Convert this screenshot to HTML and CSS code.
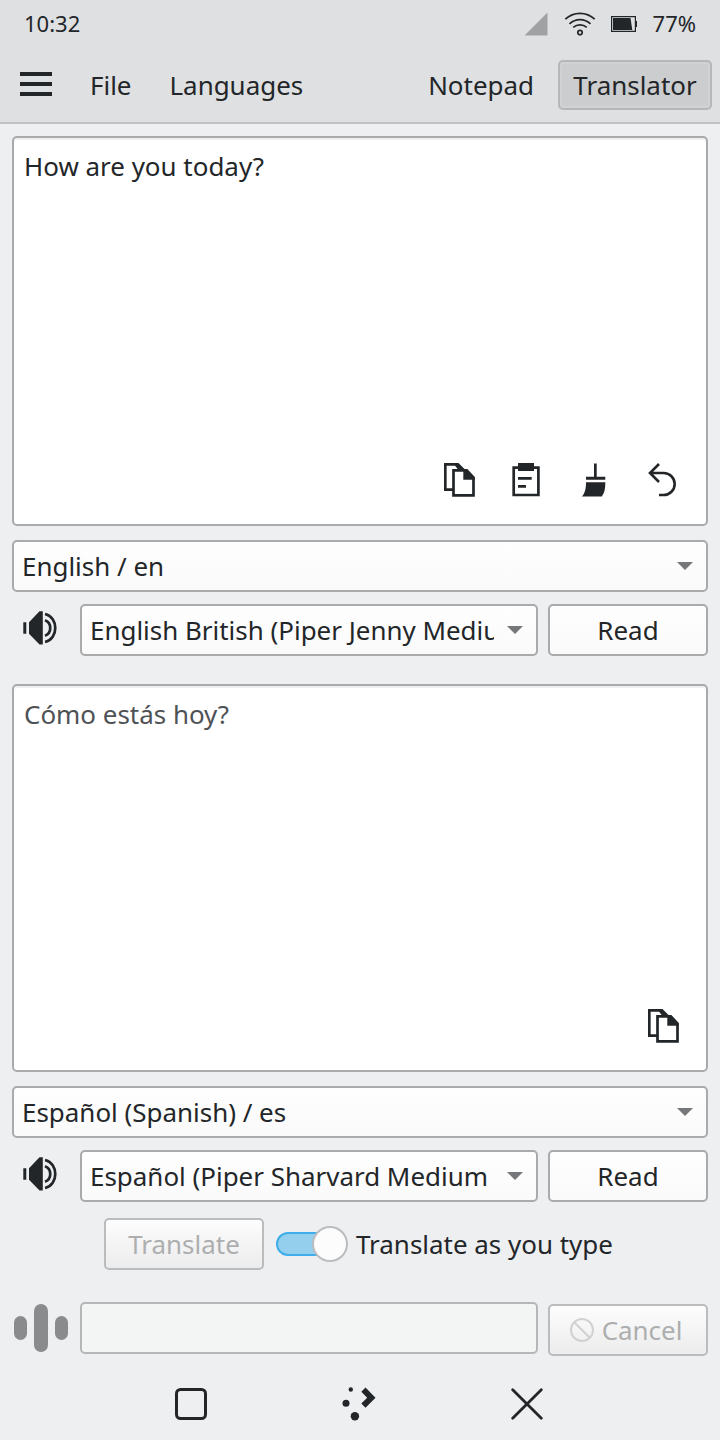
FILE: index.html
```html
<!DOCTYPE html>
<html lang="en">
<head>
<meta charset="utf-8">
<title>Translator</title>
<link rel="stylesheet" href="styles.css">
</head>
<body>
<svg class="defs" width="0" height="0">
  <symbol id="copy" viewBox="0 0 32 34">
    <path d="M9 26.700H1.300V1.300H13" fill="none" stroke="#232629" stroke-width="2.700"/>
    <path d="M9 0h5.500l6.500 6.500H14z" fill="#232629"/>
    <path d="M9.500 7.300H22l7.500 8V32.300h-20z" fill="#fff" stroke="#232629" stroke-width="2.700"/>
    <path d="M19.300 6h4l7.500 8v2.800H19.300z" fill="#232629"/>
  </symbol>
  <symbol id="speaker" viewBox="0 0 34 34">
    <path d="M.3 11.300h3v11.400h-3zM6 11.300L16.500.3H19.800v33.200H16.500L6 22.700z" fill="#232629"/>
    <path d="M22 3c13.700 3 13.700 25 0 28M22 9.300c7 2.500 7 12.900 0 15.400" fill="none" stroke="#232629" stroke-width="2.700"/>
  </symbol>
</svg>
<header class="header">
  <div class="status">
    <span class="clock">10:32</span>
    <svg class="signal" width="24" height="24"><path d="M.500 23.500L23.500.5v23z" fill="#a0a1a3"/></svg>
    <svg class="wifi" width="32" height="26" fill="none" stroke="#232629" stroke-width="1.700">
      <path d="M1.300 8.200C9.500.4 22.500.4 30.700 8.200M5.500 12.900c6-5.800 15-5.800 21 0M9.200 16.400c3.900-3.300 9.700-3.300 13.600 0"/><circle cx="16" cy="21.600" r="2.200"/>
    </svg>
    <svg class="battery" width="26" height="16"><path d="M.600.6h23.800v14.800H.6z" fill="none" stroke="#232629" stroke-width="1.200"/><path d="M24.500 5H26v6h-1.500z" fill="#232629"/><path d="M2 2h17.500L21.300 14H2z" fill="#232629"/></svg>
    <span class="percent">77%</span>
  </div>
  <nav class="toolbar">
    <div class="burger"><i></i><i></i><i></i></div>
    <span class="file">File</span>
    <span class="languages">Languages</span>
    <span class="notepad">Notepad</span>
    <span class="active">Translator</span>
  </nav>
</header>
<main class="main">
  <section class="editor source">
    <p>How are you today?</p>
    <div class="tools">
      <svg width="32" height="34"><use href="#copy"/></svg>
      <svg class="paste" width="28" height="34"><path d="M1.700 4.700h24.700v27.300H1.700z" fill="none" stroke="#232629" stroke-width="2.700"/><path d="M6 0h16v8H6zM6 14h13.700v2.700H6zM6 22h8v2.700H6z" fill="#232629"/></svg>
      <svg class="brush" width="24" height="34"><path d="M12 .5h2.700v13.200h8.600v3H4v-3h8zM4 19.300H23.300c0 5-.3 10-3.500 14.200H0c3.500-4 4-9 4-14.200z" fill="#232629"/></svg>
      <svg class="undo" width="28" height="34"><path d="M11 1L2 10l9 9M2 10h13.700a11 11 0 0 1 0 22H11" fill="none" stroke="#232629" stroke-width="2.600"/></svg>
    </div>
  </section>
  <div class="field lang"><span>English / en</span><svg class="arrow" width="16" height="8"><path d="M0 0h16l-8 8z"/></svg></div>
  <div class="voice">
    <svg class="speaker" width="34" height="34"><use href="#speaker"/></svg>
    <div class="field combo"><span>English British (Piper Jenny Medium)</span><svg class="arrow" width="16" height="8"><path d="M0 0h16l-8 8z"/></svg></div>
    <div class="field button"><span>Read</span></div>
  </div>
  <section class="editor result">
    <p>Cómo estás hoy?</p>
    <div class="tools"><svg width="32" height="34"><use href="#copy"/></svg></div>
  </section>
  <div class="field lang"><span>Español (Spanish) / es</span><svg class="arrow" width="16" height="8"><path d="M0 0h16l-8 8z"/></svg></div>
  <div class="voice">
    <svg class="speaker" width="34" height="34"><use href="#speaker"/></svg>
    <div class="field combo"><span>Español (Piper Sharvard Medium</span><svg class="arrow" width="16" height="8"><path d="M0 0h16l-8 8z"/></svg></div>
    <div class="field button"><span>Read</span></div>
  </div>
  <div class="translate">
    <div class="field button disabled"><span>Translate</span></div>
    <div class="switch"><div class="track"></div><div class="knob"></div></div>
    <span class="label">Translate as you type</span>
  </div>
  <div class="listen">
    <div class="levels"><i></i><i class="tall"></i><i></i></div>
    <div class="field speech"></div>
    <div class="field button disabled cancel">
      <svg width="24" height="24" fill="none" stroke="#d0d1d2" stroke-width="2"><circle cx="12" cy="12" r="11"/><path d="M4.200 4.200l15.600 15.600"/></svg>
      <span>Cancel</span>
    </div>
  </div>
</main>
<footer class="navbar">
  <svg width="32" height="32"><rect x="1.500" y="1.500" width="29" height="29" rx="4" fill="none" stroke="#232629" stroke-width="3"/></svg>
  <svg width="34" height="34" fill="#232629"><circle cx="8.800" cy="2.500" r="2.200"/><circle cx="4" cy="16.200" r="3.500"/><circle cx="12.900" cy="29.200" r="4.200"/><path d="M23.500.6L33.500 10.700 23.500 20.800 19.300 16.600l5.900-5.900-5.900-5.900z"/></svg>
  <svg width="32" height="32"><path d="M1.700 1.700l28.600 28.600m0-28.600L1.700 30.300" stroke="#232629" stroke-width="2.800" stroke-linecap="round"/></svg>
</footer>
</body>
</html>
```
FILE: styles.css
```css
* { box-sizing: border-box; }
body {
  margin: 0;
  width: 720px;
  height: 1440px;
  background: #eeeff1;
  color: #232629;
  font: 25.95px/36px "Noto Sans", sans-serif;
  display: flex;
  flex-direction: column;
}
svg { display: block; flex: none; }
.defs { position: absolute; }
p { margin: 0; }
.header { height: 124px; background: #dee0e2; border-bottom: 2px solid #bfc1c3; }
.status { height: 48px; display: flex; align-items: center; padding: 0 24px; font-size: 22px; }
.clock { margin-right: auto; }
.clock, .percent { padding-bottom: 2px; }
.signal { margin-right: 16px; }
.wifi { margin-right: 15px; }
.battery { margin-right: 16px; }
.toolbar { height: 74px; padding: 0 8px 0 20px; display: flex; align-items: center; }
.burger { width: 32px; display: grid; gap: 6px; margin: 0 38px 2px 0; }
.burger i { height: 4px; background: #232629; }
.languages { margin-left: 38px; }
.notepad { margin-left: auto; margin-right: 24px; }
.active {
  width: 154px;
  height: 50px;
  line-height: 47px;
  text-align: center;
  border: 2px solid #b5b7b9;
  border-radius: 5px;
  background: #cbcdcf;
  box-shadow: inset 0 0 0 2px #d0d2d4;
}
.main { padding: 12px 12px 0; display: flex; flex-direction: column; }
.editor {
  height: 390px;
  padding: 10px 30px 27px 10px;
  background: #fff;
  border: 2px solid #a9aaab;
  border-radius: 5px;
  box-shadow: inset 0 2px 0 #f0f0f0;
  display: flex;
  flex-direction: column;
  justify-content: space-between;
}
.tools { display: flex; justify-content: flex-end; }
.paste { margin-left: 36px; }
.brush { margin-left: 42px; }
.undo { margin-left: 42px; }
.result { height: 388px; margin-top: 28px; padding-right: 26px; color: #4f5255; }
.field {
  height: 52px;
  display: flex;
  align-items: center;
  border: 2px solid #a9aaab;
  border-radius: 5px;
  background: linear-gradient(#fefefe, #fafafa);
  white-space: nowrap;
}
.lang { margin-top: 14px; padding: 0 13px 0 8px; justify-content: space-between; }
.arrow { fill: #75777a; }
.voice { margin-top: 12px; display: flex; }
.speaker { margin: 7px 23px 0 11px; }
.combo { width: 458px; padding: 0 13px 0 8px; justify-content: space-between; }
.combo span { width: 404px; overflow: hidden; }
.button { width: 160px; margin-left: 10px; justify-content: center; }
.disabled { color: #adaeaf; border-color: #bbbcbe; background: linear-gradient(#fdfdfd, #ececed); }
.translate { margin-top: 16px; padding-left: 82px; display: flex; align-items: center; }
.switch { width: 72px; margin: 0 8px 0 12px; display: flex; align-items: center; }
.track {
  flex: none;
  width: 60px;
  height: 24px;
  margin-right: -24px;
  border: 2px solid #3daee9;
  border-radius: 12px;
  background: #94cfee;
}
.knob { flex: none; position: relative; width: 36px; height: 36px; border: 2px solid #bbbcbe; border-radius: 50%; background: #fcfcfc; }
.listen { margin-top: 32px; display: flex; align-items: flex-start; }
.levels { width: 68px; height: 52px; padding-left: 2px; display: flex; align-items: center; gap: 7px; }
.levels i { width: 13px; height: 24px; border-radius: 7px; background: #898b8d; }
.levels .tall { width: 14px; height: 48px; }
.speech { width: 458px; background: #f3f4f4; border-color: #b4b6b7; }
.cancel { margin-top: 2px; gap: 8px; padding-right: 4px; }
.navbar { height: 72px; margin-top: auto; display: flex; align-items: center; justify-content: space-between; padding: 0 177px 0 175px; }
```
